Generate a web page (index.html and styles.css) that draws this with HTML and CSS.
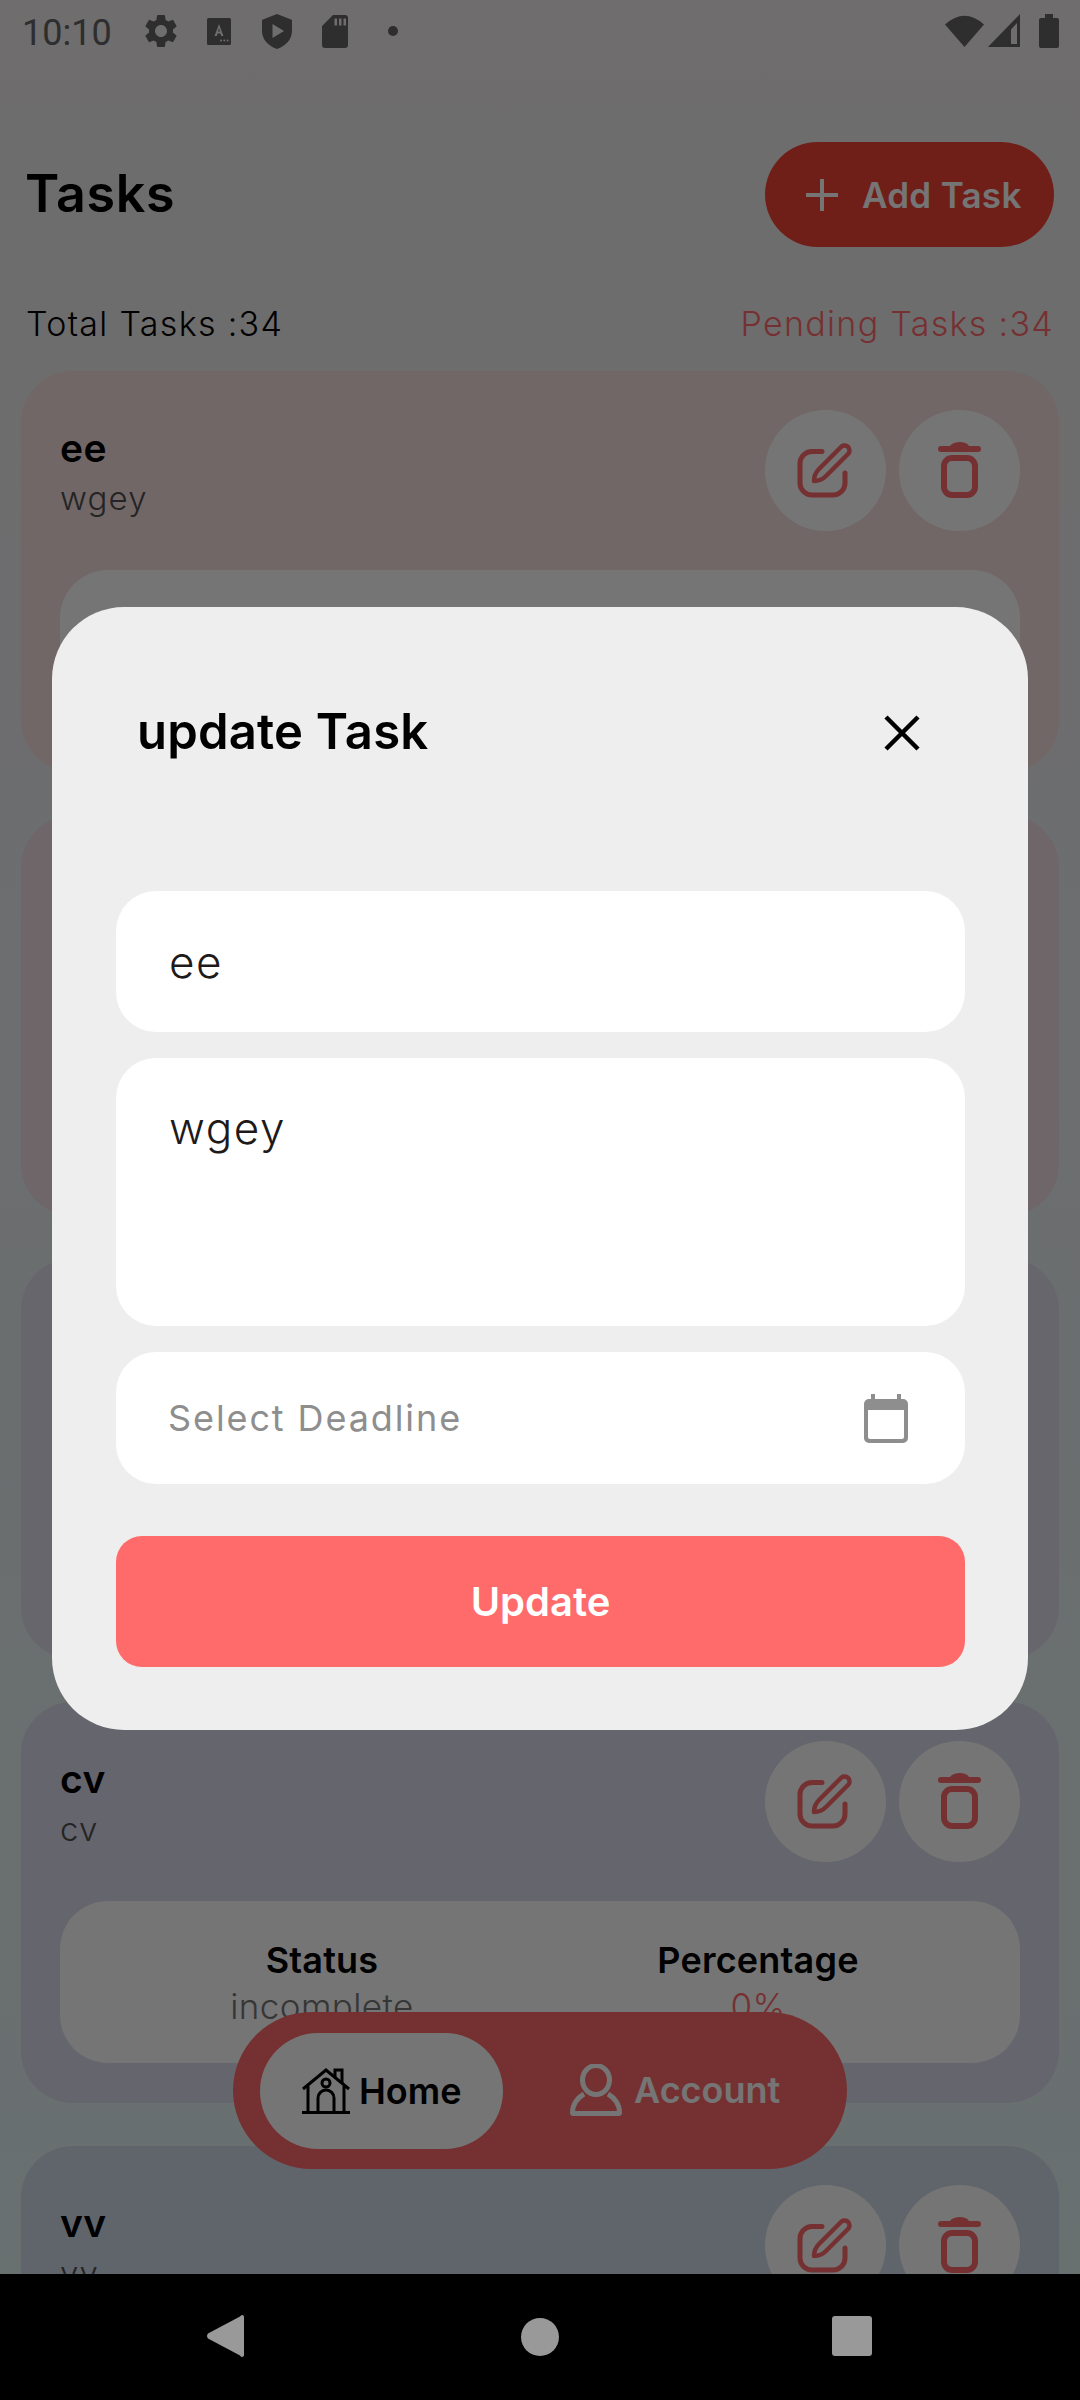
FILE: index.html
```html
<!DOCTYPE html>
<html lang="en">
<head>
<meta charset="utf-8">
<title>Tasks</title>
<link rel="stylesheet" href="styles.css">
</head>
<body>
<svg class="defs" width="0" height="0" aria-hidden="true">
  <symbol id="edit" viewBox="0 0 121 121">
    <path class="ln" d="M57 41.500H47a12 12 0 0 0-12 12V73a12 12 0 0 0 12 12h21a12 12 0 0 0 12-12V63"/>
    <path class="ln thin" d="M76.500 36.500a5 5 0 0 1 7 7L61 66c-3 3-8 5-12 5 0-4 2-9 5-12Z"/>
  </symbol>
  <symbol id="trash" viewBox="0 0 121 121">
    <path class="fl" d="M42 36a3 3 0 0 0 0 6h37a3 3 0 0 0 0-6H70c-2-3-5-4-9-4s-8 1-10 4Z"/>
    <rect class="ln6" x="45" y="48" width="31" height="37" rx="8"/>
  </symbol>
</svg>
<div class="screen">
  <div class="app">
    <div class="statusbar">
      <span class="clock">10:10</span>
      <svg class="ic gear" viewBox="0 0 24 24"><path d="M19.14 12.94c.04-.3.06-.61.06-.94 0-.32-.02-.64-.07-.94l2.03-1.58c.18-.14.23-.41.12-.61l-1.92-3.32c-.12-.22-.37-.29-.59-.22l-2.39.96c-.5-.38-1.03-.7-1.62-.94l-.36-2.54c-.04-.24-.24-.41-.48-.41h-3.84c-.24 0-.43.17-.47.41l-.36 2.54c-.59.24-1.13.57-1.62.94l-2.39-.96c-.22-.08-.47 0-.59.22L2.74 8.87c-.12.21-.08.47.12.61l2.03 1.58c-.05.3-.09.63-.09.94s.02.64.07.94l-2.03 1.58c-.18.14-.23.41-.12.61l1.92 3.32c.12.22.37.29.59.22l2.39-.96c.5.38 1.03.7 1.62.94l.36 2.54c.05.24.24.41.48.41h3.84c.24 0 .44-.17.47-.41l.36-2.54c.59-.24 1.13-.56 1.62-.94l2.39.96c.22.08.47 0 .59-.22l1.92-3.32c.12-.22.07-.47-.12-.61l-2.01-1.58zM12 15.6c-1.98 0-3.6-1.62-3.6-3.6s1.62-3.6 3.6-3.6 3.6 1.62 3.6 3.6-1.62 3.6-3.6 3.6z"/></svg>
      <svg class="ic abox" viewBox="0 0 24 27"><path fill-rule="evenodd" d="M1.5 0h21A1.5 1.5 0 0 1 24 1.5v24a1.500 1.500 0 0 1-1.500 1.500h-21A1.500 1.500 0 0 1 0 25.500v-24A1.500 1.500 0 0 1 1.500 0ZM12 6 7.500 18h2.300l.8-2.400h2.800l.8 2.400h2.300L12 6Zm0 4 .9 3.600h-1.800Zm2 11.500a1 1 0 1 0 0 2 1 1 0 0 0 0-2Zm3.300 0a1 1 0 1 0 0 2 1 1 0 0 0 0-2Zm3.300 0a1 1 0 1 0 0 2 1 1 0 0 0 0-2Z"/></svg>
      <svg class="ic shield" viewBox="0 0 30 35"><path fill-rule="evenodd" d="M15 0 29 5.500a1 1 0 0 1 1 1V17c0 8-6 15-15 18C6 32 0 25 0 17V6.500a1 1 0 0 1 1-1ZM10.500 10v14L22 17Z"/></svg>
      <svg class="ic sd" viewBox="0 0 26 33"><path fill-rule="evenodd" d="M11 0h12a3 3 0 0 1 3 3v27a3 3 0 0 1-3 3H3a3 3 0 0 1-3-3V11ZM12.500 3.500v7h2.500v-7Zm4.500 0v7h2.500v-7Zm4.500 0v7H24v-7Z"/></svg>
      <span class="dot"></span>
      <span class="sb-space"></span>
      <svg class="ic wifi" viewBox="0 0 39 33"><path d="M0 10.500Q19.500-7 39 10.500L19.500 33Z"/></svg>
      <svg class="ic signal" viewBox="0 0 32 33"><path fill-rule="evenodd" d="M32 0v33H0ZM29 9l-6 6.500V30h6Z"/></svg>
      <svg class="ic battery" viewBox="0 0 20 34"><path d="M6 0h8v4h4a2 2 0 0 1 2 2v26a2 2 0 0 1-2 2H2a2 2 0 0 1-2-2V6a2 2 0 0 1 2-2h4Z"/></svg>
    </div>

    <header class="head">
      <h1 class="head-title">Tasks</h1>
      <button class="add-btn">
        <svg class="plus" viewBox="0 0 32 32"><path d="M16 0v32M0 16h32"/></svg>
        <span>Add Task</span>
      </button>
    </header>

    <div class="summary">
      <span class="total">Total Tasks :34</span>
      <span class="pending">Pending Tasks :34</span>
    </div>

    <div class="cards">
      <article class="card tint1">
        <div class="card-top">
          <div class="card-text"><div class="card-title">ee</div><div class="card-desc">wgey</div></div>
          <div class="card-actions">
            <span class="round"><svg class="action"><use href="#edit"/></svg></span>
            <span class="round"><svg class="action"><use href="#trash"/></svg></span>
          </div>
        </div>
        <div class="stats"></div>
      </article>
      <article class="card tint2 blank"></article>
      <article class="card tint3 blank"></article>
      <article class="card tint4">
        <div class="card-top">
          <div class="card-text"><div class="card-title">cv</div><div class="card-desc">cv</div></div>
          <div class="card-actions">
            <span class="round"><svg class="action"><use href="#edit"/></svg></span>
            <span class="round"><svg class="action"><use href="#trash"/></svg></span>
          </div>
        </div>
        <div class="stats">
          <div class="stat"><div class="stat-label">Status</div><div class="stat-value">incomplete</div></div>
          <div class="stat"><div class="stat-label">Percentage</div><div class="stat-value red">0%</div></div>
        </div>
      </article>
      <article class="card tint5">
        <div class="card-top">
          <div class="card-text"><div class="card-title">vv</div><div class="card-desc">vv</div></div>
          <div class="card-actions">
            <span class="round"><svg class="action"><use href="#edit"/></svg></span>
            <span class="round"><svg class="action"><use href="#trash"/></svg></span>
          </div>
        </div>
      </article>
    </div>

    <nav class="tabbar">
      <div class="tab active">
        <svg class="home-ic" viewBox="0 0 48 46"><path d="M1 21 24 2l23 19M6 18v26M42 18v26M0 44.500h48M16 44V30a8 8 0 0 1 16 0v14"/><circle cx="24" cy="15" r="4"/><path d="M33 10V2h7v14"/></svg>
        <span>Home</span>
      </div>
      <div class="tab">
        <svg class="user-ic" viewBox="0 0 52 52"><ellipse cx="26" cy="16" rx="13.500" ry="14.500"/><path d="M14 30C7 34 2.500 41 2.500 48.500a1 1 0 0 0 1 1h45a1 1 0 0 0 1-1C49.500 41 45 34 38 30"/></svg>
        <span>Account</span>
      </div>
    </nav>

    <div class="scrim"></div>

    <section class="modal">
      <div class="modal-head">
        <h2 class="modal-title">update Task</h2>
        <svg class="close" viewBox="0 0 36 36"><path d="M2 2l32 32M34 2 2 34"/></svg>
      </div>
      <div class="field one">ee</div>
      <div class="field area">wgey</div>
      <div class="field date">
        <span>Select Deadline</span>
        <svg class="cal" viewBox="0 0 44 49"><path fill-rule="evenodd" d="M7 0h4v5h22V0h4v5h2a5 5 0 0 1 5 5v34a5 5 0 0 1-5 5H5a5 5 0 0 1-5-5V10a5 5 0 0 1 5-5h2Zm-3 16v27a2 2 0 0 0 2 2h32a2 2 0 0 0 2-2V16Z"/></svg>
      </div>
      <button class="submit">Update</button>
    </section>
  </div>

  <div class="navbar">
    <svg class="nv back" viewBox="0 0 37 42"><path d="M35 0a2 2 0 0 1 2 2v38a2 2 0 0 1-2 2q-1 0-2-1.500L1 23.500q-2-2.500 0-5L33 1.500Q34 0 35 0Z"/></svg>
    <span class="nv-circle"></span>
    <span class="nv-square"></span>
  </div>
</div>
</body>
</html>
```

FILE: styles.css
```css
* { box-sizing: border-box; }
html, body { margin: 0; padding: 0; }
body { width: 1080px; height: 2400px; overflow: hidden; font-family: Inter, "Liberation Sans", sans-serif; background: #000; }
.defs { position: absolute; }
.screen { width: 1080px; height: 2400px; display: flex; flex-direction: column; }
.app {
  position: relative; flex: 1; min-height: 0; overflow: hidden;
  background: linear-gradient(180deg, #f1edef 0%, #ebeff2 50%, #e4f3f3 100%);
}

/* status bar */
.statusbar { height: 64px; display: flex; align-items: flex-start; padding: 14px 21px 0 22px; }
.clock { font-family: Roboto, sans-serif; font-size: 36px; line-height: 38px; color: #646464; width: 123px; flex: none; }
.ic { fill: #646464; display: block; flex: none; }
.gear { width: 40px; height: 40px; margin: -3px 0 0 -4px; }
.abox { width: 24px; height: 27px; margin: 4px 0 0 26px; }
.shield { width: 30px; height: 35px; margin: 0 0 0 31px; }
.sd { width: 26px; height: 33px; margin: 1px 0 0 30px; }
.dot { width: 10px; height: 10px; border-radius: 50%; background: #646464; margin: 12px 0 0 40px; }
.sb-space { flex: 1; }
.wifi { width: 39px; height: 33px; }
.signal { width: 32px; height: 33px; margin-left: 4px; }
.battery { width: 20px; height: 34px; margin-left: 19px; }

/* header */
.head { display: flex; align-items: center; justify-content: space-between; padding: 78px 26px 0; }
.head-title { margin: -2px 0 0 -1px; font-size: 52px; font-weight: 600; letter-spacing: .6px; color: #000; }
.add-btn {
  width: 289px; height: 105px; border: 0; border-radius: 53px; background: #f44336; color: #fff;
  display: flex; align-items: center; gap: 24px; padding: 0 0 0 41px;
  font: 600 35px Inter, sans-serif; letter-spacing: .3px; white-space: nowrap;
}
.plus { width: 32px; height: 32px; flex: none; fill: none; stroke: #fff; stroke-width: 4; }

.summary { display: flex; justify-content: space-between; padding: 55px 26px 0; font-size: 34px; line-height: 44px; letter-spacing: 1.300px; }
.total { color: #000; font-weight: 300; }
.pending { color: #ff6b6b; font-weight: 300; }

/* cards */
.cards { display: flex; flex-direction: column; gap: 42.67px; padding: 25px 21px 0; }
.card { flex: none; height: 401px; border-radius: 52px; padding: 39px 39px 0 40px; }
.tint1 { background: #f6e0e0; }
.tint2 { background: #f2dfe5; }
.tint3 { background: #e0deee; }
.tint4 { background: #dcdcef; }
.tint5 { background: #d1dceb; }
.card-top { display: flex; justify-content: space-between; height: 121px; }
.card-text { padding-top: 13px; margin-left: -1px; }
.card-title { font-size: 39px; line-height: 50px; font-weight: 600; color: #000; letter-spacing: .4px; }
.card-desc { font-size: 33px; line-height: 50px; font-weight: 300; color: #505050; letter-spacing: 1.200px; }
.card-actions { display: flex; gap: 13px; }
.round { width: 121px; height: 121px; border-radius: 50%; background: #fff; display: block; }
.action { width: 121px; height: 121px; display: block; }
.ln { fill: none; stroke: #ff6b6b; stroke-width: 5; stroke-linecap: round; stroke-linejoin: round; }
.ln.thin { stroke-width: 4.500; }
.ln6 { fill: none; stroke: #ff6b6b; stroke-width: 6; }
.fl { fill: #ff6b6b; }

.stats { margin: 39px 0 0 -1px; height: 162px; background: #fff; border-radius: 48px; display: flex; justify-content: center; padding-top: 36px; }
.stat { width: 436px; text-align: center; }
.stat-label { font-size: 36px; line-height: 46px; font-weight: 600; color: #000; letter-spacing: .2px; }
.stat-value { font-size: 35px; line-height: 46px; font-weight: 300; color: #777; letter-spacing: .4px; }
.stat-value.red { color: #ff6b6b; }

/* bottom tabs */
.tabbar {
  position: absolute; left: 233px; top: 2012px; width: 614px; height: 157px; border-radius: 79px;
  background: #ff6b6b; display: flex; align-items: center; padding-left: 27px;
}
.tab { display: flex; align-items: center; font-size: 36px; font-weight: 600; color: #fff; margin-top: -2px; }
.tab.active { width: 243px; height: 116px; border-radius: 58px; background: #fff; color: #000; padding-left: 42px; gap: 9px; margin: 0 67px 0 0; }
.home-ic { width: 48px; height: 46px; fill: none; stroke: #000; stroke-width: 3; flex: none; }
.user-ic { width: 52px; height: 52px; fill: none; stroke: #fff; stroke-width: 5; flex: none; margin-right: 12px; }

.scrim { position: absolute; inset: 0; background: rgba(0,0,0,.54); }

/* dialog */
.modal {
  position: absolute; left: 52px; top: 607px; width: 976px; height: 1123px; border-radius: 72px;
  background: #eee; padding: 0 63px 0 64px;
}
.modal-head { height: 284px; display: flex; align-items: flex-start; justify-content: space-between; padding: 97px 3px 0 21px; }
.modal-title { margin: 0; font-size: 49px; line-height: 56px; font-weight: 600; color: #000; letter-spacing: .2px; }
.close { width: 36px; height: 36px; fill: none; stroke: #000; stroke-width: 4.500; margin: 11px 42px 0 0; }
.field { background: #fff; border-radius: 40px; padding-left: 53px; color: #1f1a1a; font-size: 44px; font-weight: 300; letter-spacing: 1.600px; }
.field.one { height: 141px; display: flex; align-items: center; margin-bottom: 26px; }
.field.area { height: 268px; padding-top: 45px; line-height: 50px; margin-bottom: 26px; }
.field.date { height: 132px; display: flex; align-items: center; justify-content: space-between; padding-right: 57px; padding-left: 52px; color: #8e8e8e; font-size: 36px; letter-spacing: 1.900px; font-weight: 400; margin-bottom: 52px; }
.cal { width: 44px; height: 49px; fill: #8e8e8e; flex: none; }
.submit { display: block; width: 100%; height: 131px; border: 0; border-radius: 26px; background: #ff6b6b; color: #fff; font: 600 40px Inter, sans-serif; }

/* system nav */
.navbar { height: 126px; flex: none; background: #000; display: flex; align-items: center; position: relative; padding: 0 0 0 207px; }
.nv { fill: #999; flex: none; }
.back { width: 37px; height: 42px; margin-top: -2px; }
.nv-circle { width: 38px; height: 38px; border-radius: 50%; background: #999; margin: -1px 0 0 277px; flex: none; }
.nv-square { width: 40px; height: 40px; border-radius: 3px; background: #999; margin: -2px 0 0 273px; flex: none; }
```
